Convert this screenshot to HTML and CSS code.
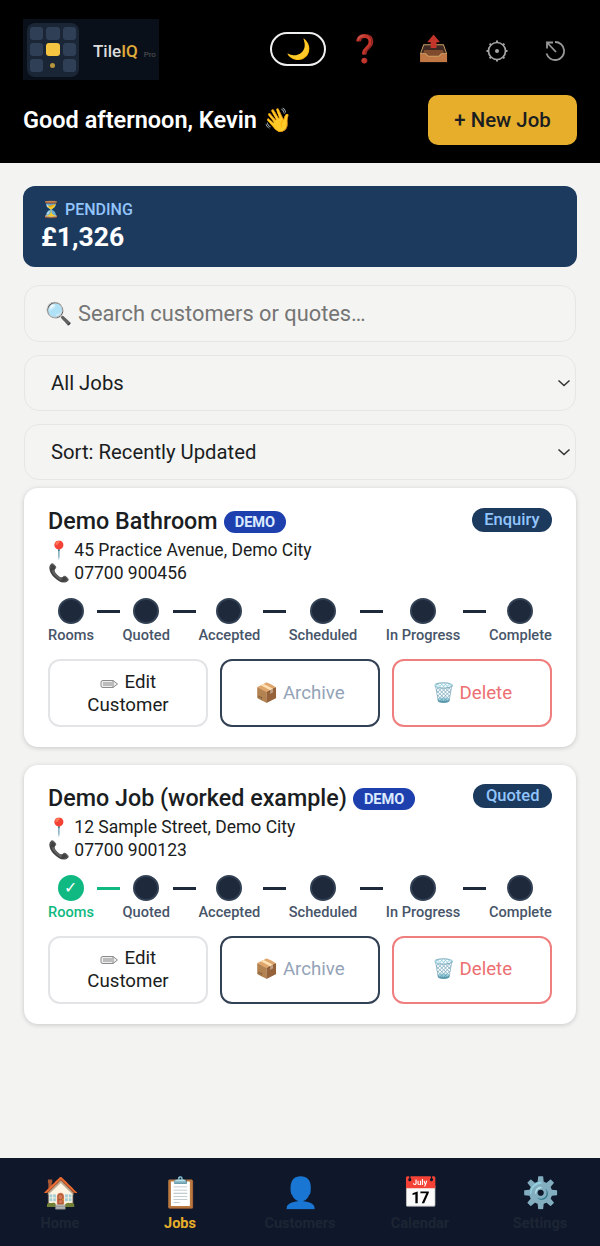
FILE: index.html
```html
<!DOCTYPE html>
<html lang="en">
<head>
    <meta charset="UTF-8">
    <meta name="viewport" content="width=device-width, initial-scale=1.0">
    <title>TileIQ Jobs</title>
    <link rel="stylesheet" href="styles.css">
</head>
<body>
    <header class="top">
        <div class="top-row">
            <div class="logo">
                <div class="logo-mark">
                    <i class="tile"></i><i class="tile"></i><i class="tile"></i>
                    <i class="tile"></i><i class="tile tile-gold"></i><i class="tile"></i>
                    <i class="tile"></i><i class="tile-spot"></i><i class="tile"></i>
                </div>
                <span class="logo-name">Tile<b>IQ</b></span><span class="logo-pro">Pro</span>
            </div>
            <div class="top-icons">
                <span class="moon-pill">🌙</span>
                <span class="top-icon">❓</span>
                <span class="top-icon tray">📤</span>
                <span class="top-icon line-icon">
                    <svg width="24" height="24" viewBox="0 0 24 24" fill="none" stroke="#cfcfcf" stroke-width="1.700">
                        <circle cx="12" cy="12" r="8.500"/>
                        <circle cx="12" cy="12" r="2" fill="#cfcfcf" stroke="none"/>
                        <path d="M12 1.500v2.500M12 20v2.500M1.500 12H4M20 12h2.500M4.600 4.600l1.700 1.700M17.700 17.700l1.700 1.700M4.600 19.400l1.700-1.700M17.700 6.300l1.700-1.700" stroke-width="2"/>
                    </svg>
                </span>
                <span class="top-icon line-icon">
                    <svg width="24" height="24" viewBox="0 0 24 24" fill="none" stroke="#bdbdbd" stroke-width="1.800">
                        <path d="M12 3a9 9 0 1 1-8.500 11.500"/>
                        <path d="M4.500 4 13 13M4 9.500V3.500h6"/>
                    </svg>
                </span>
            </div>
        </div>
        <div class="greet-row">
            <h1>Good afternoon, Kevin 👋</h1>
            <button class="new-job">+ New Job</button>
        </div>
    </header>

    <main class="content">
        <div class="pending">
            <div class="pending-label">⏳ PENDING</div>
            <div class="pending-value">£1,326</div>
        </div>
        <div class="field search">🔍 <span>Search customers or quotes…</span></div>
        <div class="field select">All Jobs <svg width="14" height="8" viewBox="0 0 14 8"><path d="M1.500 1.500 7 6.500l5.500-5" fill="none" stroke="#333" stroke-width="1.500"/></svg></div>
        <div class="field select">Sort: Recently Updated <svg width="14" height="8" viewBox="0 0 14 8"><path d="M1.500 1.500 7 6.500l5.500-5" fill="none" stroke="#333" stroke-width="1.500"/></svg></div>

        <section class="card">
            <div class="card-head">
                <h2>Demo Bathroom</h2><span class="demo">DEMO</span>
                <span class="status">Enquiry</span>
            </div>
            <div class="line">📍 45 Practice Avenue, Demo City</div>
            <div class="line">📞 07700 900456</div>
            <div class="steps">
                <div class="step"><span class="dot"></span><span class="step-name">Rooms</span></div><i class="bar"></i>
                <div class="step"><span class="dot"></span><span class="step-name">Quoted</span></div><i class="bar"></i>
                <div class="step"><span class="dot"></span><span class="step-name">Accepted</span></div><i class="bar"></i>
                <div class="step"><span class="dot"></span><span class="step-name">Scheduled</span></div><i class="bar"></i>
                <div class="step"><span class="dot"></span><span class="step-name">In Progress</span></div><i class="bar"></i>
                <div class="step"><span class="dot"></span><span class="step-name">Complete</span></div>
            </div>
            <div class="actions">
                <button class="btn edit">
                    <svg class="pencil" width="18" height="10" viewBox="0 0 18 10" fill="#eeeeee" stroke="#8a8a8a"><path d="M1 3q0-1.500 2-1.500h10L17.500 5 13 8.500H3Q1 8.500 1 7z"/><path d="M3 4h9M3 6h9M13 1.500v7"/></svg>
                    Edit Customer
                </button>
                <button class="btn archive">📦 Archive</button>
                <button class="btn delete">🗑️ Delete</button>
            </div>
        </section>

        <section class="card">
            <div class="card-head">
                <h2>Demo Job (worked example)</h2><span class="demo">DEMO</span>
                <span class="status">Quoted</span>
            </div>
            <div class="line">📍 12 Sample Street, Demo City</div>
            <div class="line">📞 07700 900123</div>
            <div class="steps">
                <div class="step done"><span class="dot">✓</span><span class="step-name">Rooms</span></div><i class="bar bar-done"></i>
                <div class="step"><span class="dot"></span><span class="step-name">Quoted</span></div><i class="bar"></i>
                <div class="step"><span class="dot"></span><span class="step-name">Accepted</span></div><i class="bar"></i>
                <div class="step"><span class="dot"></span><span class="step-name">Scheduled</span></div><i class="bar"></i>
                <div class="step"><span class="dot"></span><span class="step-name">In Progress</span></div><i class="bar"></i>
                <div class="step"><span class="dot"></span><span class="step-name">Complete</span></div>
            </div>
            <div class="actions">
                <button class="btn edit">
                    <svg class="pencil" width="18" height="10" viewBox="0 0 18 10" fill="#eeeeee" stroke="#8a8a8a"><path d="M1 3q0-1.500 2-1.500h10L17.500 5 13 8.500H3Q1 8.500 1 7z"/><path d="M3 4h9M3 6h9M13 1.500v7"/></svg>
                    Edit Customer
                </button>
                <button class="btn archive">📦 Archive</button>
                <button class="btn delete">🗑️ Delete</button>
            </div>
        </section>
    </main>

    <nav class="tabs">
        <div class="tab"><span class="tab-icon">🏠</span><span class="tab-name">Home</span></div>
        <div class="tab active"><span class="tab-icon">📋</span><span class="tab-name">Jobs</span></div>
        <div class="tab"><span class="tab-icon">👤</span><span class="tab-name">Customers</span></div>
        <div class="tab"><span class="tab-icon">📅</span><span class="tab-name">Calendar</span></div>
        <div class="tab"><span class="tab-icon">⚙️</span><span class="tab-name">Settings</span></div>
    </nav>
</body>
</html>
```

FILE: styles.css
```css
* {
    box-sizing: border-box;
}
body {
    margin: 0;
    height: 1246px;
    display: flex;
    flex-direction: column;
    overflow: hidden;
    background-color: #f3f3f1;
    font-family: Roboto, "Noto Sans", sans-serif;
    color: #1a1d21;
}
button {
    font-family: inherit;
}
.top {
    background-color: #000;
    height: 163px;
    padding: 19px 23px 0;
}
.top-row {
    display: flex;
    justify-content: space-between;
    align-items: center;
    height: 61px;
}
.logo {
    width: 136px;
    height: 61px;
    background-color: #0a101a;
    display: flex;
    align-items: center;
    padding-left: 4px;
}
.logo-mark {
    width: 52px;
    height: 54px;
    padding: 4px 3px;
    border-radius: 8px;
    background-color: #1a2535;
    display: grid;
    grid-template-columns: repeat(3, 1fr);
    grid-template-rows: repeat(3, 1fr);
    gap: 3px;
    place-items: stretch;
}
.tile {
    border-radius: 3px;
    background-color: #2f3f56;
}
.tile-gold {
    background-color: #f5c542;
}
.tile-spot {
    width: 5px;
    height: 5px;
    border-radius: 50%;
    background-color: #b8953a;
    place-self: center;
}
.logo-name {
    color: #dcdcdc;
    font-size: 17px;
    font-weight: 500;
    margin: 3px 0 0 14px;
}
.logo-name b {
    color: #e0ac3a;
    font-weight: 500;
}
.logo-pro {
    color: #555;
    font-size: 8px;
    margin: 9px 0 0 6px;
}
.top-icons {
    display: grid;
    grid-template-columns: 56px 78px 58px 70px 46px;
    align-items: center;
    justify-items: center;
    margin: -1px -1px 0 0;
}
.moon-pill {
    width: 56px;
    height: 34px;
    border: 2px solid #f0f0f0;
    border-radius: 17px;
    display: flex;
    align-items: center;
    justify-content: center;
    font-size: 20px;
}
.top-icon {
    font-size: 27px;
    line-height: 34px;
    opacity: 0.8;
    display: flex;
    align-items: center;
}
.tray {
    font-size: 25px;
}
.line-icon {
    margin-top: 4px;
}
.greet-row {
    display: flex;
    justify-content: space-between;
    align-items: center;
    margin-top: 15px;
}
h1 {
    margin: 0;
    color: #fff;
    font-size: 23.5px;
    font-weight: 600;
}
.new-job {
    width: 149px;
    height: 50px;
    border: none;
    border-radius: 10px;
    background-color: #e6ae2b;
    color: #1a1d21;
    font-size: 20.400px;
    font-weight: 500;
}
.content {
    flex: 1;
    padding: 23px 24px 0;
}
.pending {
    height: 81px;
    margin: 0 -1px;
    border-radius: 12px;
    background-color: #1c3a5e;
    padding: 14px 18px;
}
.pending-label {
    color: #93c5fd;
    font-size: 16px;
    line-height: 19px;
    font-weight: 500;
}
.pending-value {
    color: #fff;
    font-size: 26.600px;
    line-height: 36px;
    font-weight: 700;
}
.field {
    height: 56px;
    margin-top: 13px;
    border: 1px solid #e6e6e4;
    border-radius: 15px;
    background-color: #f4f4f2;
    display: flex;
    align-items: center;
    font-size: 20.300px;
    padding: 0 26px;
}
.search {
    height: 57px;
    margin-top: 18px;
    padding: 0 20px;
    gap: 6px;
    font-size: 21.800px;
    color: #757575;
}
.select {
    justify-content: space-between;
    padding-right: 4px;
}
.card {
    margin-top: 8px;
    margin-bottom: 17.5px;
    background-color: #fff;
    border-radius: 14px;
    box-shadow: 0 1px 5px rgba(0, 0, 0, 0.18);
    padding: 18px 24px 20px;
}
.card-head {
    display: flex;
    align-items: center;
    height: 30px;
}
h2 {
    margin: 0;
    font-size: 23.300px;
    font-weight: 500;
}
.demo {
    margin: 2px 0 0 6px;
    height: 22px;
    line-height: 22px;
    padding: 0 11px;
    border-radius: 11px;
    background-color: #1e40af;
    color: #dbeafe;
    font-size: 14.600px;
    font-weight: 700;
}
.status {
    margin: 0 0 3px auto;
    height: 24px;
    line-height: 24px;
    padding: 0 12.5px;
    border-radius: 12px;
    background-color: #1c3a5e;
    color: #93c5fd;
    font-size: 16.500px;
    font-weight: 500;
}
.line {
    font-size: 17.500px;
    line-height: 23px;
}
.card-head + .line {
    margin-top: 3px;
}
.steps {
    display: flex;
    justify-content: space-between;
    align-items: flex-start;
    margin-top: 13px;
}
.step {
    display: flex;
    flex-direction: column;
    align-items: center;
    gap: 3px;
}
.dot {
    width: 26px;
    height: 26px;
    border-radius: 50%;
    background-color: #1e293b;
    border: 2px solid #334155;
}
.step-name {
    color: #475569;
    font-size: 14.600px;
    line-height: 17px;
    font-weight: 500;
}
.bar {
    flex: 0 0 23px;
    height: 3px;
    margin-top: 12px;
    background-color: #1e293b;
}
.bar-done {
    background-color: #10b981;
}
.done .dot {
    background-color: #10b981;
    border-color: #10b981;
    color: #fff;
    font-size: 16px;
    text-align: center;
    line-height: 22px;
}
.done .step-name {
    color: #10b981;
}
.actions {
    display: flex;
    gap: 12px;
    margin-top: 15px;
}
.btn {
    flex: 1;
    height: 68px;
    border-radius: 12px;
    background-color: #fff;
    font-size: 18.700px;
    line-height: 23px;
    padding: 0 20px;
}
.pencil {
    vertical-align: -1px;
    margin-right: 2px;
}
.edit {
    border: 2px solid #e2e4e6;
    color: #1a1d21;
    padding-top: 1px;
}
.archive {
    border: 2px solid #334155;
    color: #94a3b8;
}
.delete {
    border: 2px solid #ef7f7f;
    color: #ec6f71;
}
.tabs {
    height: 88px;
    background-color: #0f172a;
    display: flex;
}
.tab {
    flex: 1;
    display: flex;
    flex-direction: column;
    align-items: center;
    padding-top: 14px;
}
.tab-icon {
    font-size: 30px;
    line-height: 42px;
}
.tab-name {
    margin-top: 1px;
    color: #1c2533;
    font-size: 14.500px;
    line-height: 17px;
    font-weight: 700;
}
.active .tab-name {
    color: #e6ae2b;
}
```
